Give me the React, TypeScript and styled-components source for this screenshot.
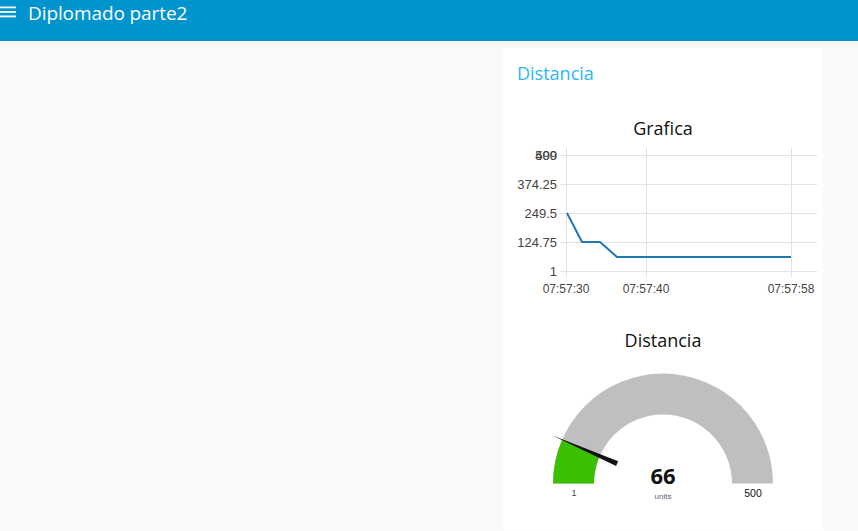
import React from "react";
import styled, { createGlobalStyle } from "styled-components";

const Global = createGlobalStyle`
  html, body { margin: 0; padding: 0; background: #fafafa; }
  body { font-family: "Open Sans", "Noto Sans", sans-serif; overflow: hidden; }
`;

const Page = styled.div`
  width: 858px;
  height: 531px;
  display: flex;
  flex-direction: column;
  background: #fafafa;
`;

const Toolbar = styled.header`
  height: 41px;
  background: #0094ce;
  display: flex;
  align-items: flex-start;
  gap: 12px;
  padding: 0;
  color: #fff;
  flex-shrink: 0;
`;

const MenuIcon = styled.svg`
  margin-top: 6px;
  flex-shrink: 0;
`;

const Title = styled.h1`
  margin: 0;
  font-size: 19px;
  font-weight: 400;
  line-height: 26px;
  letter-spacing: -0.1px;
`;

const Content = styled.main`
  flex: 1;
  display: flex;
  padding: 7px 0 0 503px;
`;

const Group = styled.section`
  width: 320px;
  height: 482px;
  background: #fff;
  display: flex;
  flex-direction: column;
`;

const GroupTitle = styled.h2`
  margin: 0;
  padding: 13px 14px 0;
  font-size: 18px;
  font-weight: 400;
  line-height: 24px;
  color: #2bb7f5;
`;

const Widget = styled.div<{ $top: number }>`
  display: flex;
  flex-direction: column;
  align-items: center;
  margin-top: ${(p) => p.$top}px;
`;

const WidgetTitle = styled.div`
  font-size: 18px;
  line-height: 24px;
  color: #111;
  text-align: center;
`;

const ChartSvg = styled.svg`
  display: block;
  align-self: stretch;
  font-family: "Liberation Sans", Arial, sans-serif;
`;

const GaugeSvg = styled.svg`
  display: block;
  align-self: stretch;
  margin-top: 8px;
  font-family: "Liberation Sans", Arial, sans-serif;
`;

// chart geometry in svg coords (svg origin = page (503,140))
const OX = 503;
const OY = 140;
const yTicks: { label: string; y: number }[] = [
  { label: "500", y: 155 },
  { label: "499", y: 155 },
  { label: "374.25", y: 184 },
  { label: "249.5", y: 213 },
  { label: "124.75", y: 242 },
  { label: "1", y: 271 },
];
const xTicks = [
  { label: "07:57:30", x: 566 },
  { label: "07:57:40", x: 646 },
  { label: "07:57:58", x: 791 },
];
const series = [
  [567, 213],
  [582, 242],
  [600, 242],
  [617, 257],
  [791, 257],
];

function LineChart() {
  return (
    <ChartSvg width={320} height={160} viewBox="0 0 320 160">
      {[155, 184, 213, 242, 271].map((y) => (
        <line key={y} x1={560 - OX} x2={817 - OX} y1={y - OY + 0.5} y2={y - OY + 0.5} stroke="#e2e2e2" strokeWidth={1} />
      ))}
      {xTicks.map((t) => (
        <line key={t.x} x1={t.x - OX + 0.5} x2={t.x - OX + 0.5} y1={148 - OY} y2={277 - OY} stroke="#e2e2e2" strokeWidth={1} />
      ))}
      {yTicks.map((t) => (
        <text key={t.label} x={557 - OX} y={t.y - OY + 5} textAnchor="end" fontSize={13} fill="#444">
          {t.label}
        </text>
      ))}
      {xTicks.map((t) => (
        <text key={t.label} x={t.x - OX} y={293 - OY} textAnchor="middle" fontSize={12} fill="#444">
          {t.label}
        </text>
      ))}
      <polyline
        points={series.map(([x, y]) => `${x - OX},${y - OY}`).join(" ")}
        fill="none"
        stroke="#1f77b4"
        strokeWidth={2}
      />
    </ChartSvg>
  );
}

// gauge svg origin = page (503, 360)
function Gauge({ value, min, max }: { value: number; min: number; max: number }) {
  const cx = 663 - 503;
  const cy = 483.5 - 360;
  const R = 110;
  const r = 69;
  const frac = (value - min) / (max - min);
  const a = Math.PI * frac; // angle from left horizontal
  const px = (rad: number, ang: number) => cx - rad * Math.cos(ang);
  const py = (rad: number, ang: number) => cy - rad * Math.sin(ang);
  const bg = `M ${cx - R} ${cy} A ${R} ${R} 0 0 1 ${cx + R} ${cy} L ${cx + r} ${cy} A ${r} ${r} 0 0 0 ${cx - r} ${cy} Z`;
  const fg = `M ${cx - R} ${cy} A ${R} ${R} 0 0 1 ${px(R, a)} ${py(R, a)} L ${px(r, a)} ${py(r, a)} A ${r} ${r} 0 0 0 ${cx - r} ${cy} Z`;
  const nx = Math.sin(a);
  const ny = -Math.cos(a);
  const bx = px(50, a);
  const by = py(50, a);
  const w = 2.6;
  const needle = `M ${bx + nx * w} ${by + ny * w} L ${px(121, a)} ${py(121, a)} L ${bx - nx * w} ${by - ny * w} Z`;
  return (
    <GaugeSvg width={320} height={150} viewBox="0 0 320 150">
      <path d={bg} fill="#bfbfbf" />
      <path d={fg} fill="#3cbf00" />
      <path d={needle} fill="#111" />
      <text x={cx} y={484 - 360} textAnchor="middle" fontSize={22} fontWeight={700} fill="#111" fontFamily="'Open Sans', sans-serif">
        {value}
      </text>
      <text x={cx} y={499 - 360} textAnchor="middle" fontSize={8} fill="#5d5d7a">
        units
      </text>
      <text x={574 - 503} y={496 - 360} textAnchor="middle" fontSize={9} fill="#444">
        {min}
      </text>
      <text x={753 - 503} y={497 - 360} textAnchor="middle" fontSize={10.5} fill="#111">
        {max}
      </text>
    </GaugeSvg>
  );
}

export default function App() {
  return (
    <>
      <Global />
      <Page>
        <Toolbar>
          <MenuIcon width={16} height={12} viewBox="0 0 16 12">
            <rect x={0} y={0.5} width={16} height={1.8} fill="#fff" />
            <rect x={0} y={5} width={16} height={1.8} fill="#fff" />
            <rect x={0} y={9.5} width={16} height={1.8} fill="#fff" />
          </MenuIcon>
          <Title>Diplomado parte2</Title>
        </Toolbar>
        <Content>
          <Group>
            <GroupTitle>Distancia</GroupTitle>
            <Widget $top={31}>
              <WidgetTitle>Grafica</WidgetTitle>
              <LineChart />
            </Widget>
            <Widget $top={28}>
              <WidgetTitle>Distancia</WidgetTitle>
              <Gauge value={66} min={1} max={500} />
            </Widget>
          </Group>
        </Content>
      </Page>
    </>
  );
}
